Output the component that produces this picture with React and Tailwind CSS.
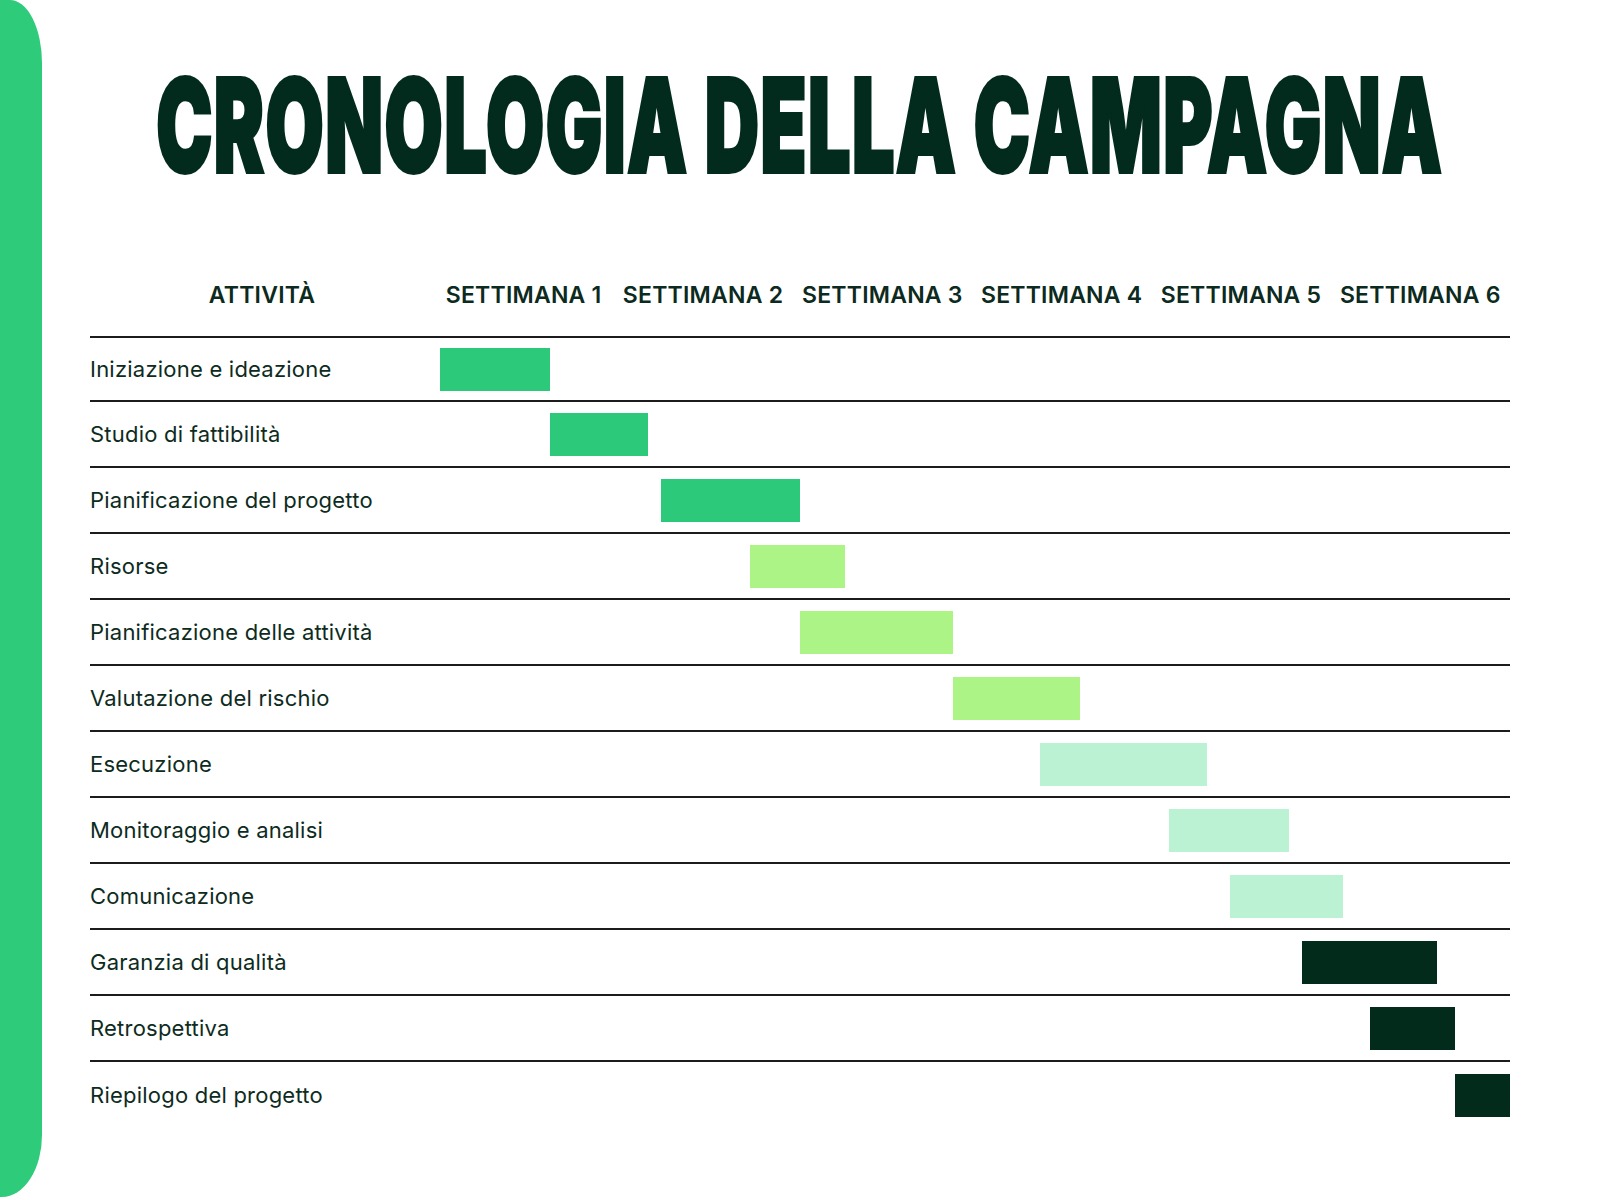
import React from "react";

const G1 = "bg-[#2dc97a]";
const G2 = "bg-[#acf486]";
const G3 = "bg-[#bcf2d4]";
const G4 = "bg-[#032b1c]";

const rows = [
  ["Iniziazione e ideazione", 0, 110, G1],
  ["Studio di fattibilità", 110, 98, G1],
  ["Pianificazione del progetto", 221, 139, G1],
  ["Risorse", 310, 95, G2],
  ["Pianificazione delle attività", 360, 153, G2],
  ["Valutazione del rischio", 513, 127, G2],
  ["Esecuzione", 600, 167, G3],
  ["Monitoraggio e analisi", 729, 120, G3],
  ["Comunicazione", 790, 113, G3],
  ["Garanzia di qualità", 862, 135, G4],
  ["Retrospettiva", 930, 85, G4],
  ["Riepilogo del progetto", 1015, 55, G4],
];

const weeks = ["SETTIMANA 1", "SETTIMANA 2", "SETTIMANA 3", "SETTIMANA 4", "SETTIMANA 5", "SETTIMANA 6"];

export default function App() {
  return (
    <div className="w-[1600px] h-[1200px] bg-white flex overflow-hidden font-['Inter',sans-serif] text-[#0c2a20]">
      <div className="w-[42px] h-[1197px] shrink-0 bg-[#2ecb7b] rounded-tr-[32px_63px] rounded-br-[40px_62px]" />
      <div className="flex-1 min-w-0 flex flex-col pl-[48px] pr-[90px]">
        <div className="mt-[61px] h-[131px] flex justify-center">
          <span className="inline-block shrink-0 whitespace-nowrap text-[129px] leading-none font-black tracking-[0.02em] text-[#022b1d] scale-x-[0.582] [-webkit-text-stroke:4px_#022b1d]">
            CRONOLOGIA DELLA CAMPAGNA
          </span>
        </div>
        <div className="mt-[62px] h-[82px] grid grid-cols-[344px_repeat(6,minmax(0,1fr))] items-center text-[23px] font-semibold tracking-[0.01em]">
          <div className="text-center">ATTIVITÀ</div>
          {weeks.map((w) => (
            <div key={w} className="text-center whitespace-nowrap">{w}</div>
          ))}
        </div>
        {rows.map(([label, left, width, color], i) => (
          <div key={label} className={"h-[66px] flex items-center " + (i < rows.length - 1 ? "border-b-2 border-[#1c1c1c]" : "") + (i === 0 ? " border-t-2 border-[#1c1c1c]" : "")}>
            <div className="w-[350px] shrink-0 text-[22px] tracking-[0.01em] text-[#0d2b21]">{label}</div>
            <div className="flex-1 flex items-center">
              <div className={"h-[43px] " + color} style={{ marginLeft: left + "px", width: width + "px" }} />
            </div>
          </div>
        ))}
      </div>
    </div>
  );
}
